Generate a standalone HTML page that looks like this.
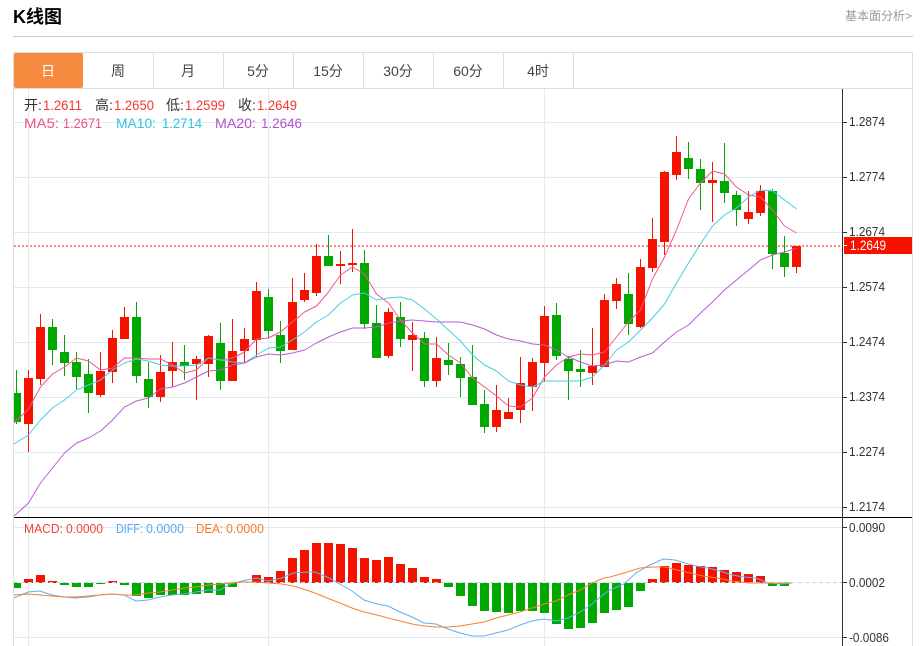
<!DOCTYPE html>
<html><head><meta charset="utf-8"><title>K线图</title>
<style>
html,body{margin:0;padding:0;background:#fff;width:920px;height:646px;overflow:hidden}
svg{position:absolute;left:0;top:0;display:block}
text{font-family:"Liberation Sans","Noto Sans CJK SC",sans-serif}
</style></head><body>
<svg width="920" height="646" viewBox="0 0 920 646" xmlns="http://www.w3.org/2000/svg">
<defs><clipPath id="c"><rect x="14" y="89" width="828" height="557"/></clipPath></defs>
<text x="13" y="23" font-size="18" font-weight="bold" fill="#000">K线图</text>
<text x="912" y="20" font-size="12" fill="#999" text-anchor="end">基本面分析&gt;</text>
<rect x="13" y="36" width="900" height="1" fill="#ccc"/>
<path d="M13.5 52.5H912.5V646M13.5 52.5V646M13.5 88.5H912.5" fill="none" stroke="#ddd"/>
<path d="M153.5 53V88M223.5 53V88M293.5 53V88M363.5 53V88M433.5 53V88M503.5 53V88M573.5 53V88" stroke="#ddd"/>
<rect x="14" y="53" width="69" height="35" rx="2" fill="#f68b3f"/>
<g font-size="14" fill="#444" text-anchor="middle">
<text x="48" y="76" fill="#fff">日</text><text x="118" y="76">周</text><text x="188" y="76">月</text><text x="258" y="76">5分</text><text x="328" y="76">15分</text><text x="398" y="76">30分</text><text x="468" y="76">60分</text><text x="538" y="76">4时</text>
</g>
<path d="M14 122.5H842M14 177.5H842M14 232.5H842M14 287.5H842M14 342.5H842M14 397.5H842M14 452.5H842M14 507.5H842M14 527.5H842M14 637.5H842M28.5 89V646M268.5 89V646M544.5 89V646" stroke="#e0ebf2" fill="none"/>
<g clip-path="url(#c)">
<path stroke="#f51300" fill="none" d="M28.5 370V452M40.5 314V385M100.5 352V397M112.5 330V383M124.5 307V339M160.5 355V402M172.5 342V387M196.5 356V400M208.5 335V377M232.5 319V381M244.5 328V363M256.5 282V357M292.5 278V350M304.5 273V302M316.5 244V296M340.5 251V284M352.5 229V272M388.5 308V358M412.5 322V371M436.5 337V387M496.5 385V432M508.5 398V419M520.5 357V423M532.5 358V411M544.5 306V382M592.5 328V385M604.5 294V367M616.5 278V309M640.5 259V328M652.5 218V272M664.5 171V255M676.5 136V180M712.5 162V222M748.5 191V224M760.5 185V216M796.5 246V273"/>
<path stroke="#00a800" fill="none" d="M16.5 370V424M52.5 319V365M64.5 335V376M76.5 352V389M88.5 359V413M136.5 302V383M148.5 362V408M184.5 345V380M220.5 323V390M268.5 289V338M280.5 321V363M328.5 235V266M364.5 250V329M376.5 305V358M400.5 302V347M424.5 332V387M448.5 343V375M460.5 357V397M472.5 345V405M484.5 390V433M556.5 303V360M568.5 356V400M580.5 350V387M628.5 273V335M688.5 142V179M700.5 159V210M724.5 143V203M736.5 191V226M772.5 189V269M784.5 236V277"/>
<path fill="#f51300" d="M24 378h9v46h-9zM36 327h9v52h-9zM96 371h9v24h-9zM108 338h9v34h-9zM120 317h9v22h-9zM156 372h9v25h-9zM168 362h9v9h-9zM192 359h9v5h-9zM204 336h9v28h-9zM228 351h9v30h-9zM240 339h9v12h-9zM252 291h9v49h-9zM288 302h9v48h-9zM300 290h9v10h-9zM312 256h9v37h-9zM336 264h9v2h-9zM348 263h9v2h-9zM384 312h9v44h-9zM408 335h9v5h-9zM432 358h9v23h-9zM492 410h9v17h-9zM504 412h9v7h-9zM516 383h9v27h-9zM528 362h9v25h-9zM540 316h9v47h-9zM588 366h9v7h-9zM600 300h9v67h-9zM612 284h9v17h-9zM636 267h9v60h-9zM648 239h9v29h-9zM660 172h9v70h-9zM672 152h9v23h-9zM708 180h9v3h-9zM744 212h9v7h-9zM756 191h9v22h-9zM792 246h9v21h-9z"/>
<path fill="#00a800" d="M12 393h9v29h-9zM48 327h9v23h-9zM60 352h9v11h-9zM72 362h9v15h-9zM84 374h9v19h-9zM132 317h9v59h-9zM144 379h9v18h-9zM180 362h9v4h-9zM216 343h9v38h-9zM264 297h9v34h-9zM276 335h9v16h-9zM324 256h9v10h-9zM360 263h9v61h-9zM372 323h9v35h-9zM396 317h9v22h-9zM420 338h9v43h-9zM444 360h9v5h-9zM456 364h9v14h-9zM468 377h9v28h-9zM480 404h9v23h-9zM552 315h9v41h-9zM564 359h9v12h-9zM576 369h9v3h-9zM624 294h9v30h-9zM684 158h9v11h-9zM696 169h9v14h-9zM720 181h9v12h-9zM732 195h9v15h-9zM768 191h9v63h-9zM780 253h9v14h-9z"/>
<g fill="none" stroke-width="1" stroke-linejoin="round">
<polyline stroke="#f4558f" points="14,423 28.5,409 40.5,387 52.5,374 64.5,367 76.5,358 88.5,361 100.5,370 112.5,368 124.5,358 136.5,358 148.5,359 160.5,359 172.5,365 184.5,373 196.5,370 208.5,358 220.5,360 232.5,358 244.5,352 256.5,339 268.5,338 280.5,332 292.5,322 304.5,312 316.5,306 328.5,292 340.5,275 352.5,267 364.5,274 376.5,294 388.5,303 400.5,320 412.5,333 424.5,344 436.5,344 448.5,355 460.5,363 472.5,378 484.5,387 496.5,396 508.5,406 520.5,407 532.5,398 544.5,377 556.5,365 568.5,357 580.5,354 592.5,355 604.5,352 616.5,337 628.5,322 640.5,310 652.5,279 664.5,257 676.5,230 688.5,199 700.5,183 712.5,171 724.5,174 736.5,187 748.5,195 760.5,197 772.5,210 784.5,226 796.5,233"/>
<polyline stroke="#45cfe0" points="14,444 28.5,435 40.5,420 52.5,408 64.5,400 76.5,390 88.5,385 100.5,380 112.5,370 124.5,363 136.5,359 148.5,361 160.5,365 172.5,366 184.5,366 196.5,365 208.5,358 220.5,360 232.5,362 244.5,363 256.5,355 268.5,348 280.5,347 292.5,340 304.5,332 316.5,322 328.5,315 340.5,303 352.5,295 364.5,293 376.5,300 388.5,298 400.5,297 412.5,300 424.5,309 436.5,319 448.5,330 460.5,341 472.5,355 484.5,365 496.5,371 508.5,381 520.5,385 532.5,387 544.5,381 556.5,381 568.5,381 580.5,381 592.5,377 604.5,365 616.5,350 628.5,342 640.5,330 652.5,318 664.5,304 676.5,283 688.5,263 700.5,244 712.5,226 724.5,215 736.5,208 748.5,197 760.5,190 772.5,191 784.5,200 796.5,209"/>
<polyline stroke="#b95ed0" points="14,516 28.5,503 40.5,483 52.5,468 64.5,453 76.5,443 88.5,438 100.5,431 112.5,420 124.5,407 136.5,401 148.5,398 160.5,389 172.5,387 184.5,383 196.5,377 208.5,371 220.5,370 232.5,365 244.5,363 256.5,357 268.5,354 280.5,355 292.5,353 304.5,350 316.5,343 328.5,337 340.5,332 352.5,328 364.5,328 376.5,327 388.5,323 400.5,321 412.5,320 424.5,321 436.5,322 448.5,322 460.5,322 472.5,325 484.5,329 496.5,335 508.5,339 520.5,341 532.5,344 544.5,345 556.5,350 568.5,357 580.5,362 592.5,366 604.5,365 616.5,361 628.5,362 640.5,357 652.5,353 664.5,342 676.5,332 688.5,325 700.5,313 712.5,302 724.5,290 736.5,280 748.5,270 760.5,260 772.5,255 784.5,252 796.5,248"/>
</g>
<path fill="#f51300" d="M24 579h9v4h-9zM36 575h9v8h-9zM48 581h9v2h-9zM108 581h9v2h-9zM252 575h9v8h-9zM264 577h9v6h-9zM276 571h9v12h-9zM288 558h9v25h-9zM300 550h9v33h-9zM312 543h9v40h-9zM324 543h9v40h-9zM336 544h9v39h-9zM348 548h9v35h-9zM360 558h9v25h-9zM372 560h9v23h-9zM384 557h9v26h-9zM396 564h9v19h-9zM408 568h9v15h-9zM420 577h9v6h-9zM432 579h9v4h-9zM648 579h9v4h-9zM660 566h9v17h-9zM672 563h9v20h-9zM684 565h9v18h-9zM696 566h9v17h-9zM708 567h9v16h-9zM720 570h9v13h-9zM732 572h9v11h-9zM744 574h9v9h-9zM756 576h9v7h-9z"/>
<path fill="#00a800" d="M12 583h9v5h-9zM60 583h9v2h-9zM72 583h9v4h-9zM84 583h9v4h-9zM96 583h9v1h-9zM120 583h9v2h-9zM132 583h9v13h-9zM144 583h9v15h-9zM156 583h9v12h-9zM168 583h9v12h-9zM180 583h9v12h-9zM192 583h9v11h-9zM204 583h9v10h-9zM216 583h9v12h-9zM228 583h9v4h-9zM444 583h9v4h-9zM456 583h9v13h-9zM468 583h9v23h-9zM480 583h9v28h-9zM492 583h9v29h-9zM504 583h9v30h-9zM516 583h9v28h-9zM528 583h9v28h-9zM540 583h9v30h-9zM552 583h9v41h-9zM564 583h9v46h-9zM576 583h9v45h-9zM588 583h9v40h-9zM600 583h9v30h-9zM612 583h9v27h-9zM624 583h9v24h-9zM636 583h9v8h-9zM768 583h9v3h-9zM780 583h9v3h-9z"/>
<path d="M14 582.5H842" stroke="#b5dcf2" stroke-dasharray="4 3" fill="none"/>
<polyline fill="none" stroke="#5fb0f5" points="14,598 28,592 40,591 52,595 64,597 76,598 88,597 100,595 112,594 124,595 136,601 148,600 160,597 172,595 184,594 196,592 208,590 220,590 230,584 242,581 256,578 268,581 282,578 293,573 309,572 315,572 327,577 340,584 352,591 364,600 377,604 388,606 400,612 412,617 424,623 436,624 448,629 460,633 472,636 484,636 496,633 508,630 520,625 532,621 544,619 556,621 568,618 580,612 592,604 604,594 610,590 624,584 636,573 648,566 663,559 675,560 685,563 696,566 708,568 720,571 732,575 744,577 756,578 768,583 780,584 792,583"/>
<polyline fill="none" stroke="#f98030" points="14,595 28,594 40,595 52,596 64,597 76,597 88,596 100,595 112,594 124,595 136,595 148,593 160,592 172,590 184,588 196,587 208,585 220,584 230,583 242,582 256,582 268,583 282,584 293,586 300,588 315,593 327,598 340,603 352,608 364,612 377,615 388,618 400,621 412,624 424,626 436,627 448,627 460,626 472,624 484,622 496,618 508,615 520,612 532,608 544,604 556,601 568,595 580,590 592,583 604,578 610,577 624,573 640,568 653,567 665,567 677,570 690,573 703,576 717,578 732,581 750,583 768,583 792,583"/>
</g>
<path d="M14 246H842" stroke="#f51300" stroke-dasharray="2 2" fill="none"/>
<rect x="14" y="517" width="898" height="1" fill="#000"/>
<rect x="842" y="89" width="1" height="557" fill="#333"/>
<path d="M843 122.5h4M843 177.5h4M843 232.5h4M843 287.5h4M843 342.5h4M843 397.5h4M843 452.5h4M843 507.5h4M843 527.5h4M843 582.5h4M843 637.5h4" stroke="#333" fill="none"/>
<g font-size="12.5" fill="#333">
<text x="849" y="126" textLength="36" lengthAdjust="spacingAndGlyphs">1.2874</text>
<text x="849" y="181" textLength="36" lengthAdjust="spacingAndGlyphs">1.2774</text>
<text x="849" y="236" textLength="36" lengthAdjust="spacingAndGlyphs">1.2674</text>
<text x="849" y="291" textLength="36" lengthAdjust="spacingAndGlyphs">1.2574</text>
<text x="849" y="346" textLength="36" lengthAdjust="spacingAndGlyphs">1.2474</text>
<text x="849" y="401" textLength="36" lengthAdjust="spacingAndGlyphs">1.2374</text>
<text x="849" y="456" textLength="36" lengthAdjust="spacingAndGlyphs">1.2274</text>
<text x="849" y="511" textLength="36" lengthAdjust="spacingAndGlyphs">1.2174</text>
<text x="849" y="532" textLength="36" lengthAdjust="spacingAndGlyphs">0.0090</text>
<text x="849" y="587" textLength="36" lengthAdjust="spacingAndGlyphs">0.0002</text>
<text x="849" y="642" textLength="40" lengthAdjust="spacingAndGlyphs">-0.0086</text>
</g>
<rect x="844" y="237" width="68" height="17" fill="#f51300"/>
<path d="M843 245.5h4" stroke="#fff"/>
<text x="850" y="250" font-size="13.5" fill="#fff" textLength="36" lengthAdjust="spacingAndGlyphs">1.2649</text>
<g font-size="14">
<text x="24" y="110" fill="#333">开:</text><text x="43" y="110" fill="#f5362d" textLength="39" lengthAdjust="spacingAndGlyphs">1.2611</text>
<text x="95" y="110" fill="#333">高:</text><text x="114" y="110" fill="#f5362d" textLength="40" lengthAdjust="spacingAndGlyphs">1.2650</text>
<text x="166" y="110" fill="#333">低:</text><text x="185" y="110" fill="#f5362d" textLength="40" lengthAdjust="spacingAndGlyphs">1.2599</text>
<text x="238" y="110" fill="#333">收:</text><text x="257" y="110" fill="#f5362d" textLength="40" lengthAdjust="spacingAndGlyphs">1.2649</text>
<text x="24" y="128" fill="#f0508c" textLength="35" lengthAdjust="spacingAndGlyphs">MA5:</text><text x="63" y="128" fill="#f0508c" textLength="39" lengthAdjust="spacingAndGlyphs">1.2671</text>
<text x="116" y="128" fill="#2ec4da" textLength="40" lengthAdjust="spacingAndGlyphs">MA10:</text><text x="162" y="128" fill="#2ec4da" textLength="40" lengthAdjust="spacingAndGlyphs">1.2714</text>
<text x="215" y="128" fill="#b450c8" textLength="41" lengthAdjust="spacingAndGlyphs">MA20:</text><text x="261" y="128" fill="#b450c8" textLength="41" lengthAdjust="spacingAndGlyphs">1.2646</text>
</g>
<g font-size="13">
<text x="24" y="533" fill="#f5413a" textLength="39" lengthAdjust="spacingAndGlyphs">MACD:</text><text x="66" y="533" fill="#f5413a" textLength="37" lengthAdjust="spacingAndGlyphs">0.0000</text>
<text x="116" y="533" fill="#55a9f2" textLength="27" lengthAdjust="spacingAndGlyphs">DIFF:</text><text x="146" y="533" fill="#55a9f2" textLength="38" lengthAdjust="spacingAndGlyphs">0.0000</text>
<text x="196" y="533" fill="#f97a20" textLength="27" lengthAdjust="spacingAndGlyphs">DEA:</text><text x="226" y="533" fill="#f97a20" textLength="38" lengthAdjust="spacingAndGlyphs">0.0000</text>
</g>
</svg>
</body></html>
